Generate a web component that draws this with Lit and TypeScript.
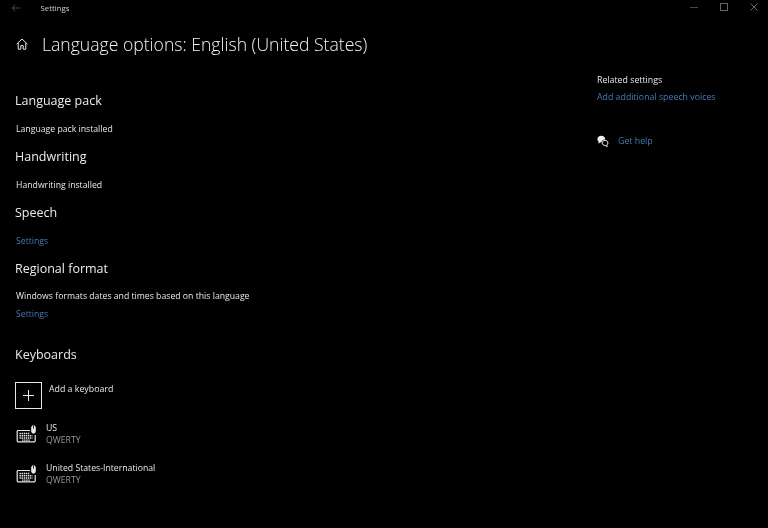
import { LitElement, html, css, svg } from "lit";
import { customElement } from "lit/decorators.js";

const keyboardIcon = svg`<svg class="kb" viewBox="0 0 22 20" width="22" height="20" fill="none" stroke="#e8e8e8" stroke-width="1.2">
  <path d="M14 6.500H2.200a1 1 0 0 0-1 1v9.300a1 1 0 0 0 1 1h16a1 1 0 0 0 1-1V11"/>
  <path d="M3.500 9.500h10M3.500 11.800h13M3.500 14h13M6 16.100h8" stroke-width="1.400" stroke-dasharray="1.400 .7"/>
  <path d="M15.600 3.400c0-1 .8-1.700 1.900-1.700s1.900.7 1.900 1.700v4c0 1-.8 1.800-1.900 1.800s-1.900-.8-1.900-1.800z" fill="#e8e8e8" stroke-width=".8"/>
  <path d="M17.500 1.700v3" stroke="#000" stroke-width=".8"/>
</svg>`;

@customElement("app-root")
export class AppRoot extends LitElement {
  static styles = css`
    :host {
      display: block;
      width: 768px;
      height: 528px;
      background: #000;
      color: #efefef;
      font-family: "Open Sans", "Noto Sans", sans-serif;
      overflow: hidden;
    }
    .frame { filter: blur(0.3px); }
    .titlebar {
      height: 15px;
      display: flex;
      align-items: center;
      padding-left: 11px;
    }
    .app { margin-left: 19.500px; font-size: 7.800px; color: #d0d0d0; }
    .winctl { margin-left: auto; display: flex; gap: 21px; padding-right: 9px; align-items: center; }
    .body { display: flex; }
    .main { width: 582px; padding-left: 15px; box-sizing: border-box; }
    .head { display: flex; align-items: center; gap: 14px; margin-top: 17px; margin-left: 1px; height: 24px; }
    .title { font-size: 17.600px; font-weight: 300; color: #f4f4f4; white-space: nowrap; }
    h2 { margin: 0; font-size: 12.500px; font-weight: 400; color: #ececec; line-height: 18px; }
    .sec { display: flex; flex-direction: column; }
    .sec p, .sec a { margin: 0; padding-left: 1px; font-size: 8.700px; line-height: 18px; }
    .sec p { color: #e8e8e8; }
    a { color: #4878b4; text-decoration: none; }
    .sec .line { margin-top: 10px; }
    .sec.s4 .line { margin-top: 9px; }
    .s1 { margin-top: 36px; }
    .s2, .s3, .s4 { margin-top: 10px; }
    .s5 { margin-top: 23px; }
    .add { display: flex; gap: 7px; margin-top: 18px; }
    .plus { width: 27px; height: 27px; box-sizing: border-box; border: 1px solid #e8e8e8; display: flex; align-items: center; justify-content: center; }
    .add span { font-size: 8.800px; color: #e8e8e8; line-height: 12px; margin-top: 1px; }
    .kblist { display: flex; flex-direction: column; gap: 16px; margin-top: 13px; margin-left: 1px; }
    .kbrow { display: flex; gap: 8px; }
    .kbrow .kb { margin-top: 2px; }
    .kbtext { display: flex; flex-direction: column; font-size: 8.700px; line-height: 12px; color: #e8e8e8; }
    .kbtext small { font-size: 8.700px; color: #969696; }
    .aside { padding-left: 15px; padding-top: 58px; font-size: 8.800px; }
    .aside .rel { line-height: 14px; color: #e8e8e8; }
    .aside a { display: block; line-height: 14px; margin-top: 3px; }
    .help { display: flex; align-items: center; gap: 9px; margin-top: 30px; }
    .help a { margin: 0; }
  `;

  render() {
    return html`
      <div class="frame">
      <div class="titlebar">
        <svg width="10" height="8" viewBox="0 0 10 8" fill="none" stroke="#4a4a4a" stroke-width="1"><path d="M9.500 4H1M4.300.7 1 4l3.300 3.300"/></svg>
        <span class="app">Settings</span>
        <div class="winctl">
          <svg width="9" height="9" viewBox="0 0 9 9" stroke="#484848" fill="none"><path d="M0 4.500h8"/></svg>
          <svg width="9" height="9" viewBox="0 0 9 9" stroke="#666" fill="none"><rect x=".5" y=".5" width="7" height="7"/></svg>
          <svg width="9" height="9" viewBox="0 0 9 9" stroke="#666" fill="none"><path d="M.5.5l7 7M7.500.5l-7 7"/></svg>
        </div>
      </div>
      <div class="body">
        <div class="main">
          <div class="head">
            <svg width="12" height="12" viewBox="0 0 12 12" fill="none" stroke="#e8e8e8" stroke-width="1"><path d="M.7 6 6 1l5.300 5M2.200 4.800v6.400h2.600V7.600h2.400v3.600h2.600V4.800"/></svg>
            <span class="title">Language options: English (United States)</span>
          </div>
          <section class="sec s1"><h2>Language pack</h2><p class="line">Language pack installed</p></section>
          <section class="sec s2"><h2>Handwriting</h2><p class="line">Handwriting installed</p></section>
          <section class="sec s3"><h2>Speech</h2><a class="line" href="#">Settings</a></section>
          <section class="sec s4"><h2>Regional format</h2><p class="line">Windows formats dates and times based on this language</p><a href="#">Settings</a></section>
          <section class="sec s5"><h2>Keyboards</h2></section>
          <div class="add">
            <div class="plus"><svg width="11" height="11" viewBox="0 0 11 11" stroke="#e8e8e8" fill="none"><path d="M5.500 0v11M0 5.500h11"/></svg></div>
            <span>Add a keyboard</span>
          </div>
          <div class="kblist">
            <div class="kbrow">${keyboardIcon}<div class="kbtext"><span>US</span><small>QWERTY</small></div></div>
            <div class="kbrow">${keyboardIcon}<div class="kbtext"><span>United States-International</span><small>QWERTY</small></div></div>
          </div>
        </div>
        <aside class="aside">
          <div class="rel">Related settings</div>
          <a href="#">Add additional speech voices</a>
          <div class="help">
            <svg width="12" height="12" viewBox="0 0 11 11"><path d="M4 .8C1.900.8.4 2 .4 3.800c0 1 .5 1.800 1.200 2.300L1.200 8l2-1.300h.9c.2-1.400 1.500-2.500 3.300-2.500h.3C7.500 2.200 6 .8 4 .8z" fill="#f0f0f0"/><path d="M7.500 5C5.900 5 4.700 6 4.700 7.300s1.200 2.300 2.800 2.300l1.800 1.200-.3-1.700c.6-.4 1-1 1-1.800C10 6 9.100 5 7.500 5z" fill="none" stroke="#f0f0f0" stroke-width=".9"/></svg>
            <a href="#">Get help</a>
          </div>
        </aside>
      </div>
      </div>
    `;
  }
}
